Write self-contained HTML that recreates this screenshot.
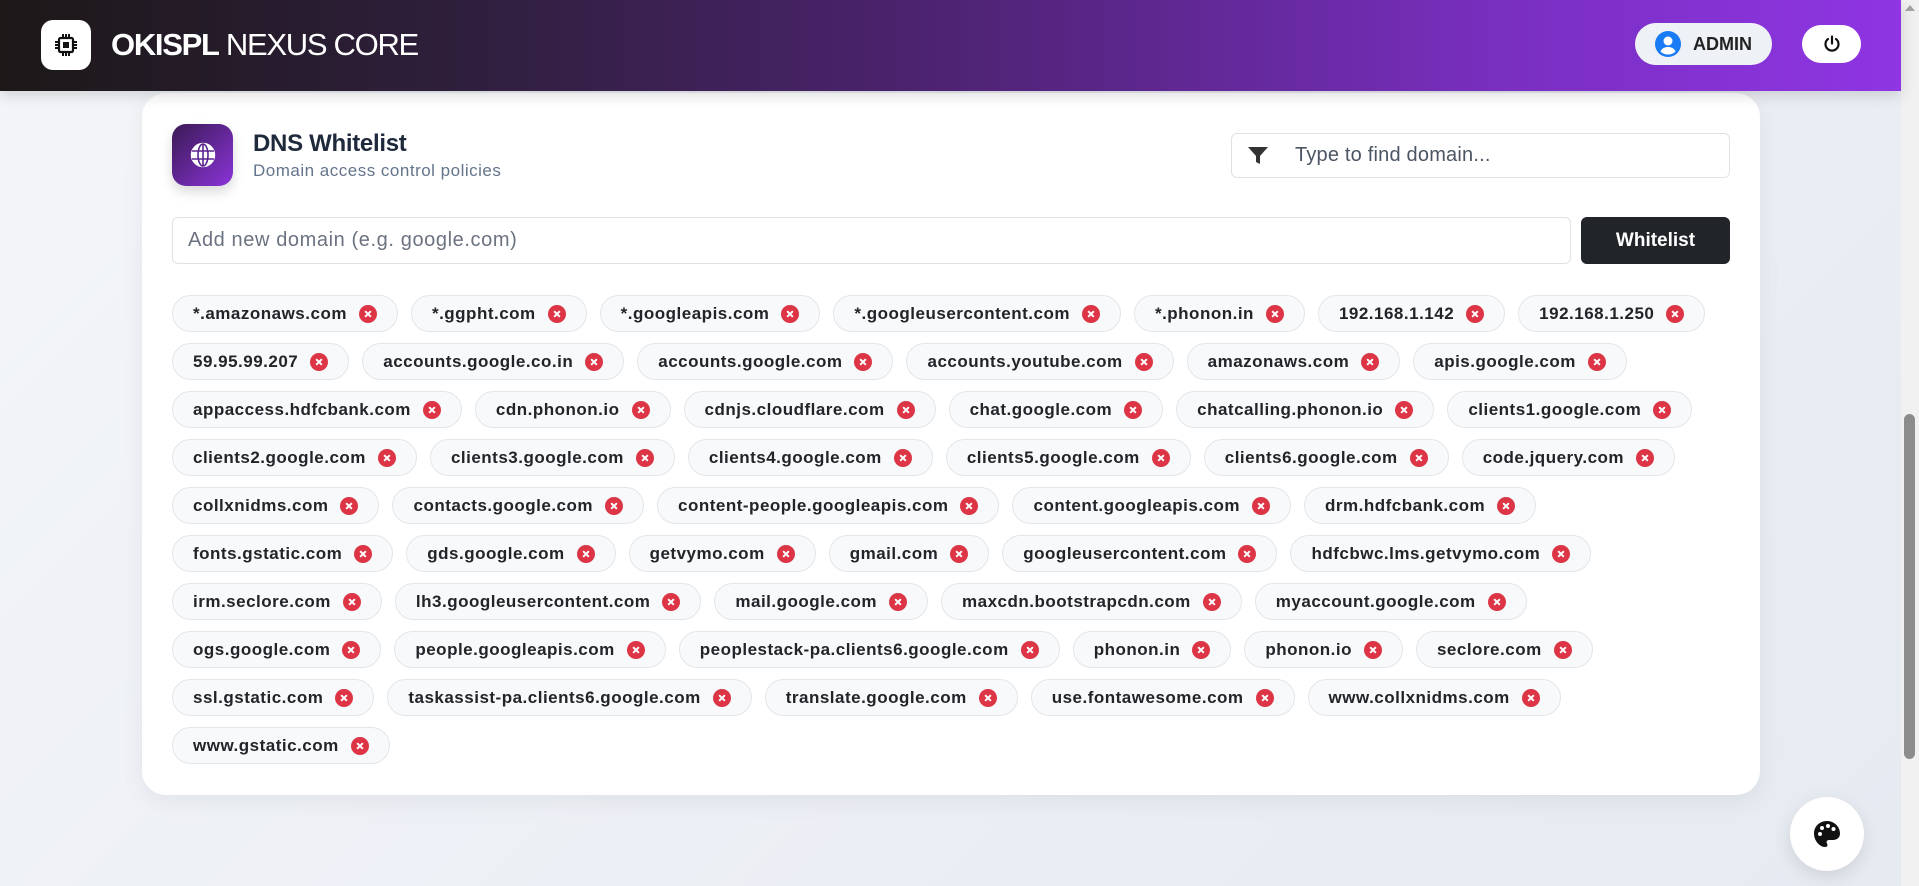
<!DOCTYPE html>
<html><head><meta charset="utf-8"><style>
*{box-sizing:border-box;margin:0;padding:0}
html,body{width:1919px;height:886px;overflow:hidden}
body{font-family:"Liberation Sans",sans-serif;background:linear-gradient(135deg,#f3f5f9 0%,#e6eaf1 100%);position:relative}
.hdr{position:absolute;left:0;top:0;width:1901px;height:91px;background:linear-gradient(90deg,#1c1818 0%,#2f1f3d 25%,#4e2373 50%,#7a2fc2 80%,#8f35e3 100%);box-shadow:0 4px 14px rgba(0,0,0,.15);z-index:2}
.logo{position:absolute;left:41px;top:20px;width:50px;height:50px;background:#fff;border-radius:12px;display:flex;align-items:center;justify-content:center}
.brand{position:absolute;left:111px;top:26px;color:#fff;font-size:31px;letter-spacing:-1.3px;line-height:38px}
.brand b{font-weight:700}
.admin{position:absolute;left:1635px;top:23px;width:137px;height:42px;background:#eef2f7;border-radius:21px;display:flex;align-items:center;padding-left:20px;font-weight:700;font-size:18px;color:#222}
.admin svg{margin-right:12px}
.pwr{position:absolute;left:1802px;top:25px;width:59px;height:38px;background:#fff;border-radius:19px;display:flex;align-items:center;justify-content:center}
.card{position:absolute;left:142px;top:93px;width:1618px;height:702px;background:#fff;border-radius:24px;box-shadow:0 6px 24px rgba(0,0,0,.06)}
.gicon{position:absolute;left:30px;top:31px;width:61px;height:62px;border-radius:14px;background:linear-gradient(135deg,#3a1a55,#8a34d8);display:flex;align-items:center;justify-content:center;box-shadow:0 6px 12px rgba(0,0,0,.15)}
.ttl{position:absolute;left:111px;top:37px;font-size:24px;font-weight:700;color:#1e293b;letter-spacing:-.3px}
.sub{position:absolute;left:111px;top:68px;font-size:17px;color:#64748b;letter-spacing:.5px}
.filter{position:absolute;left:1089px;top:40px;width:499px;height:45px;border:1px solid #dee2e6;border-radius:6px;display:flex;align-items:center}
.filter svg{margin-left:15px}
.filter span{margin-left:26px;font-size:20px;color:#4b5563;letter-spacing:.2px}
.add{position:absolute;left:30px;top:124px;width:1399px;height:47px;border:1px solid #dee2e6;border-radius:6px;font-size:20px;color:#6b7280;padding-left:15px;line-height:45px;letter-spacing:.6px}
.btn{position:absolute;left:1439px;top:124px;width:149px;height:47px;background:#212529;border-radius:6px;color:#fff;font-weight:700;font-size:19px;text-align:center;line-height:47px}
.chips{position:absolute;left:30px;top:202px}
.row{display:flex;white-space:nowrap;margin-bottom:11px}
.c{height:37px;border:1px solid #e2e6ea;background:#f8f9fa;border-radius:19px;display:flex;align-items:center;padding:0 20px 0 20px;margin-right:13px;font-size:17px;font-weight:700;color:#212529;letter-spacing:.5px}
.c i{display:inline-block;width:18px;height:18px;border-radius:50%;background:#dc3545;margin-left:12px;position:relative}
.c i:before,.c i:after{content:"";position:absolute;left:8px;top:5px;width:2px;height:8px;background:#fff;transform:rotate(45deg)}
.c i:after{transform:rotate(-45deg)}
.pal{position:absolute;left:1790px;top:797px;width:74px;height:74px;border-radius:50%;background:#fff;box-shadow:0 6px 18px rgba(0,0,0,.1);display:flex;align-items:center;justify-content:center}
.sb{position:absolute;left:1901px;top:0;width:18px;height:886px;background:#f1f1f1}
.thumb{position:absolute;left:1904px;top:414px;width:11px;height:345px;background:#8c8c8c;border-radius:6px}
.arr{position:absolute;left:1905px;top:5px;width:0;height:0;border-left:5px solid transparent;border-right:5px solid transparent;border-bottom:6px solid #a3a3a3}
</style></head><body>
<div class="hdr">
 <div class="logo"><svg width="24" height="24" viewBox="0 0 24 24"><rect x="5" y="5" width="14" height="14" rx="1.5" fill="none" stroke="#111" stroke-width="2.2"/><rect x="9" y="9" width="6" height="6" fill="#111"/><g stroke="#111" stroke-width="2"><path d="M9 1v4M12 1v4M15 1v4M9 19v4M12 19v4M15 19v4M1 9h4M1 12h4M1 15h4M19 9h4M19 12h4M19 15h4"/></g></svg></div>
 <div class="brand"><b>OKISPL</b> NEXUS CORE</div>
 <div class="admin"><svg width="26" height="26" viewBox="0 0 26 26"><circle cx="13" cy="13" r="13" fill="#1a7cf5"/><circle cx="13" cy="10" r="4.5" fill="#fff"/><path d="M5.5 20.5c1.5-3.5 4.5-4.5 7.5-4.5s6 1 7.5 4.5c-2 2-4.6 3-7.5 3s-5.5-1-7.5-3z" fill="#fff"/></svg>ADMIN</div>
 <div class="pwr"><svg width="18" height="18" viewBox="0 0 18 18" fill="none" stroke="#111" stroke-width="2.2" stroke-linecap="round"><path d="M9 1.5v7"/><path d="M5 4a6.5 6.5 0 1 0 8 0"/></svg></div>
</div>
<div class="card">
 <div class="gicon"><svg width="26" height="26" viewBox="0 0 26 26" fill="none" stroke="#fff" stroke-width="2.4"><circle cx="13" cy="13" r="11" fill="#fff" stroke="#fff"/><g stroke="#5a2490" stroke-width="1.6"><path d="M13 2v22M2 9h22M2 17h22"/><ellipse cx="13" cy="13" rx="5" ry="11"/></g></svg></div>
 <div class="ttl">DNS Whitelist</div>
 <div class="sub">Domain access control policies</div>
 <div class="filter"><svg width="22" height="20" viewBox="0 0 22 20"><path d="M1 1h20l-8 9v8l-4-2v-6z" fill="#333"/></svg><span>Type to find domain...</span></div>
 <div class="add">Add new domain (e.g. google.com)</div>
 <div class="btn">Whitelist</div>
 <div class="chips">
  <div class="row"><span class="c">*.amazonaws.com<i></i></span><span class="c">*.ggpht.com<i></i></span><span class="c">*.googleapis.com<i></i></span><span class="c">*.googleusercontent.com<i></i></span><span class="c">*.phonon.in<i></i></span><span class="c">192.168.1.142<i></i></span><span class="c">192.168.1.250<i></i></span></div>
  <div class="row"><span class="c">59.95.99.207<i></i></span><span class="c">accounts.google.co.in<i></i></span><span class="c">accounts.google.com<i></i></span><span class="c">accounts.youtube.com<i></i></span><span class="c">amazonaws.com<i></i></span><span class="c">apis.google.com<i></i></span></div>
  <div class="row"><span class="c">appaccess.hdfcbank.com<i></i></span><span class="c">cdn.phonon.io<i></i></span><span class="c">cdnjs.cloudflare.com<i></i></span><span class="c">chat.google.com<i></i></span><span class="c">chatcalling.phonon.io<i></i></span><span class="c">clients1.google.com<i></i></span></div>
  <div class="row"><span class="c">clients2.google.com<i></i></span><span class="c">clients3.google.com<i></i></span><span class="c">clients4.google.com<i></i></span><span class="c">clients5.google.com<i></i></span><span class="c">clients6.google.com<i></i></span><span class="c">code.jquery.com<i></i></span></div>
  <div class="row"><span class="c">collxnidms.com<i></i></span><span class="c">contacts.google.com<i></i></span><span class="c">content-people.googleapis.com<i></i></span><span class="c">content.googleapis.com<i></i></span><span class="c">drm.hdfcbank.com<i></i></span></div>
  <div class="row"><span class="c">fonts.gstatic.com<i></i></span><span class="c">gds.google.com<i></i></span><span class="c">getvymo.com<i></i></span><span class="c">gmail.com<i></i></span><span class="c">googleusercontent.com<i></i></span><span class="c">hdfcbwc.lms.getvymo.com<i></i></span></div>
  <div class="row"><span class="c">irm.seclore.com<i></i></span><span class="c">lh3.googleusercontent.com<i></i></span><span class="c">mail.google.com<i></i></span><span class="c">maxcdn.bootstrapcdn.com<i></i></span><span class="c">myaccount.google.com<i></i></span></div>
  <div class="row"><span class="c">ogs.google.com<i></i></span><span class="c">people.googleapis.com<i></i></span><span class="c">peoplestack-pa.clients6.google.com<i></i></span><span class="c">phonon.in<i></i></span><span class="c">phonon.io<i></i></span><span class="c">seclore.com<i></i></span></div>
  <div class="row"><span class="c">ssl.gstatic.com<i></i></span><span class="c">taskassist-pa.clients6.google.com<i></i></span><span class="c">translate.google.com<i></i></span><span class="c">use.fontawesome.com<i></i></span><span class="c">www.collxnidms.com<i></i></span></div>
  <div class="row"><span class="c">www.gstatic.com<i></i></span></div>
 </div>
</div>
<div class="pal"><svg width="30" height="30" viewBox="0 0 30 30"><path d="M15 2C7.5 2 2 7.5 2 14.5S7.5 28 13 28c2.5 0 3-1.8 2-3.5-1-1.6-.2-3.5 2-3.5h4c4 0 7-2.5 7-6.5C28 7.5 22 2 15 2z" fill="#111"/><circle cx="8" cy="15" r="2" fill="#fff"/><circle cx="10" cy="9" r="2" fill="#fff"/><circle cx="16" cy="7" r="2" fill="#fff"/><circle cx="21.5" cy="10" r="2" fill="#fff"/></svg></div>
<div class="sb"></div><div class="arr"></div><div class="thumb"></div>
</body></html>
